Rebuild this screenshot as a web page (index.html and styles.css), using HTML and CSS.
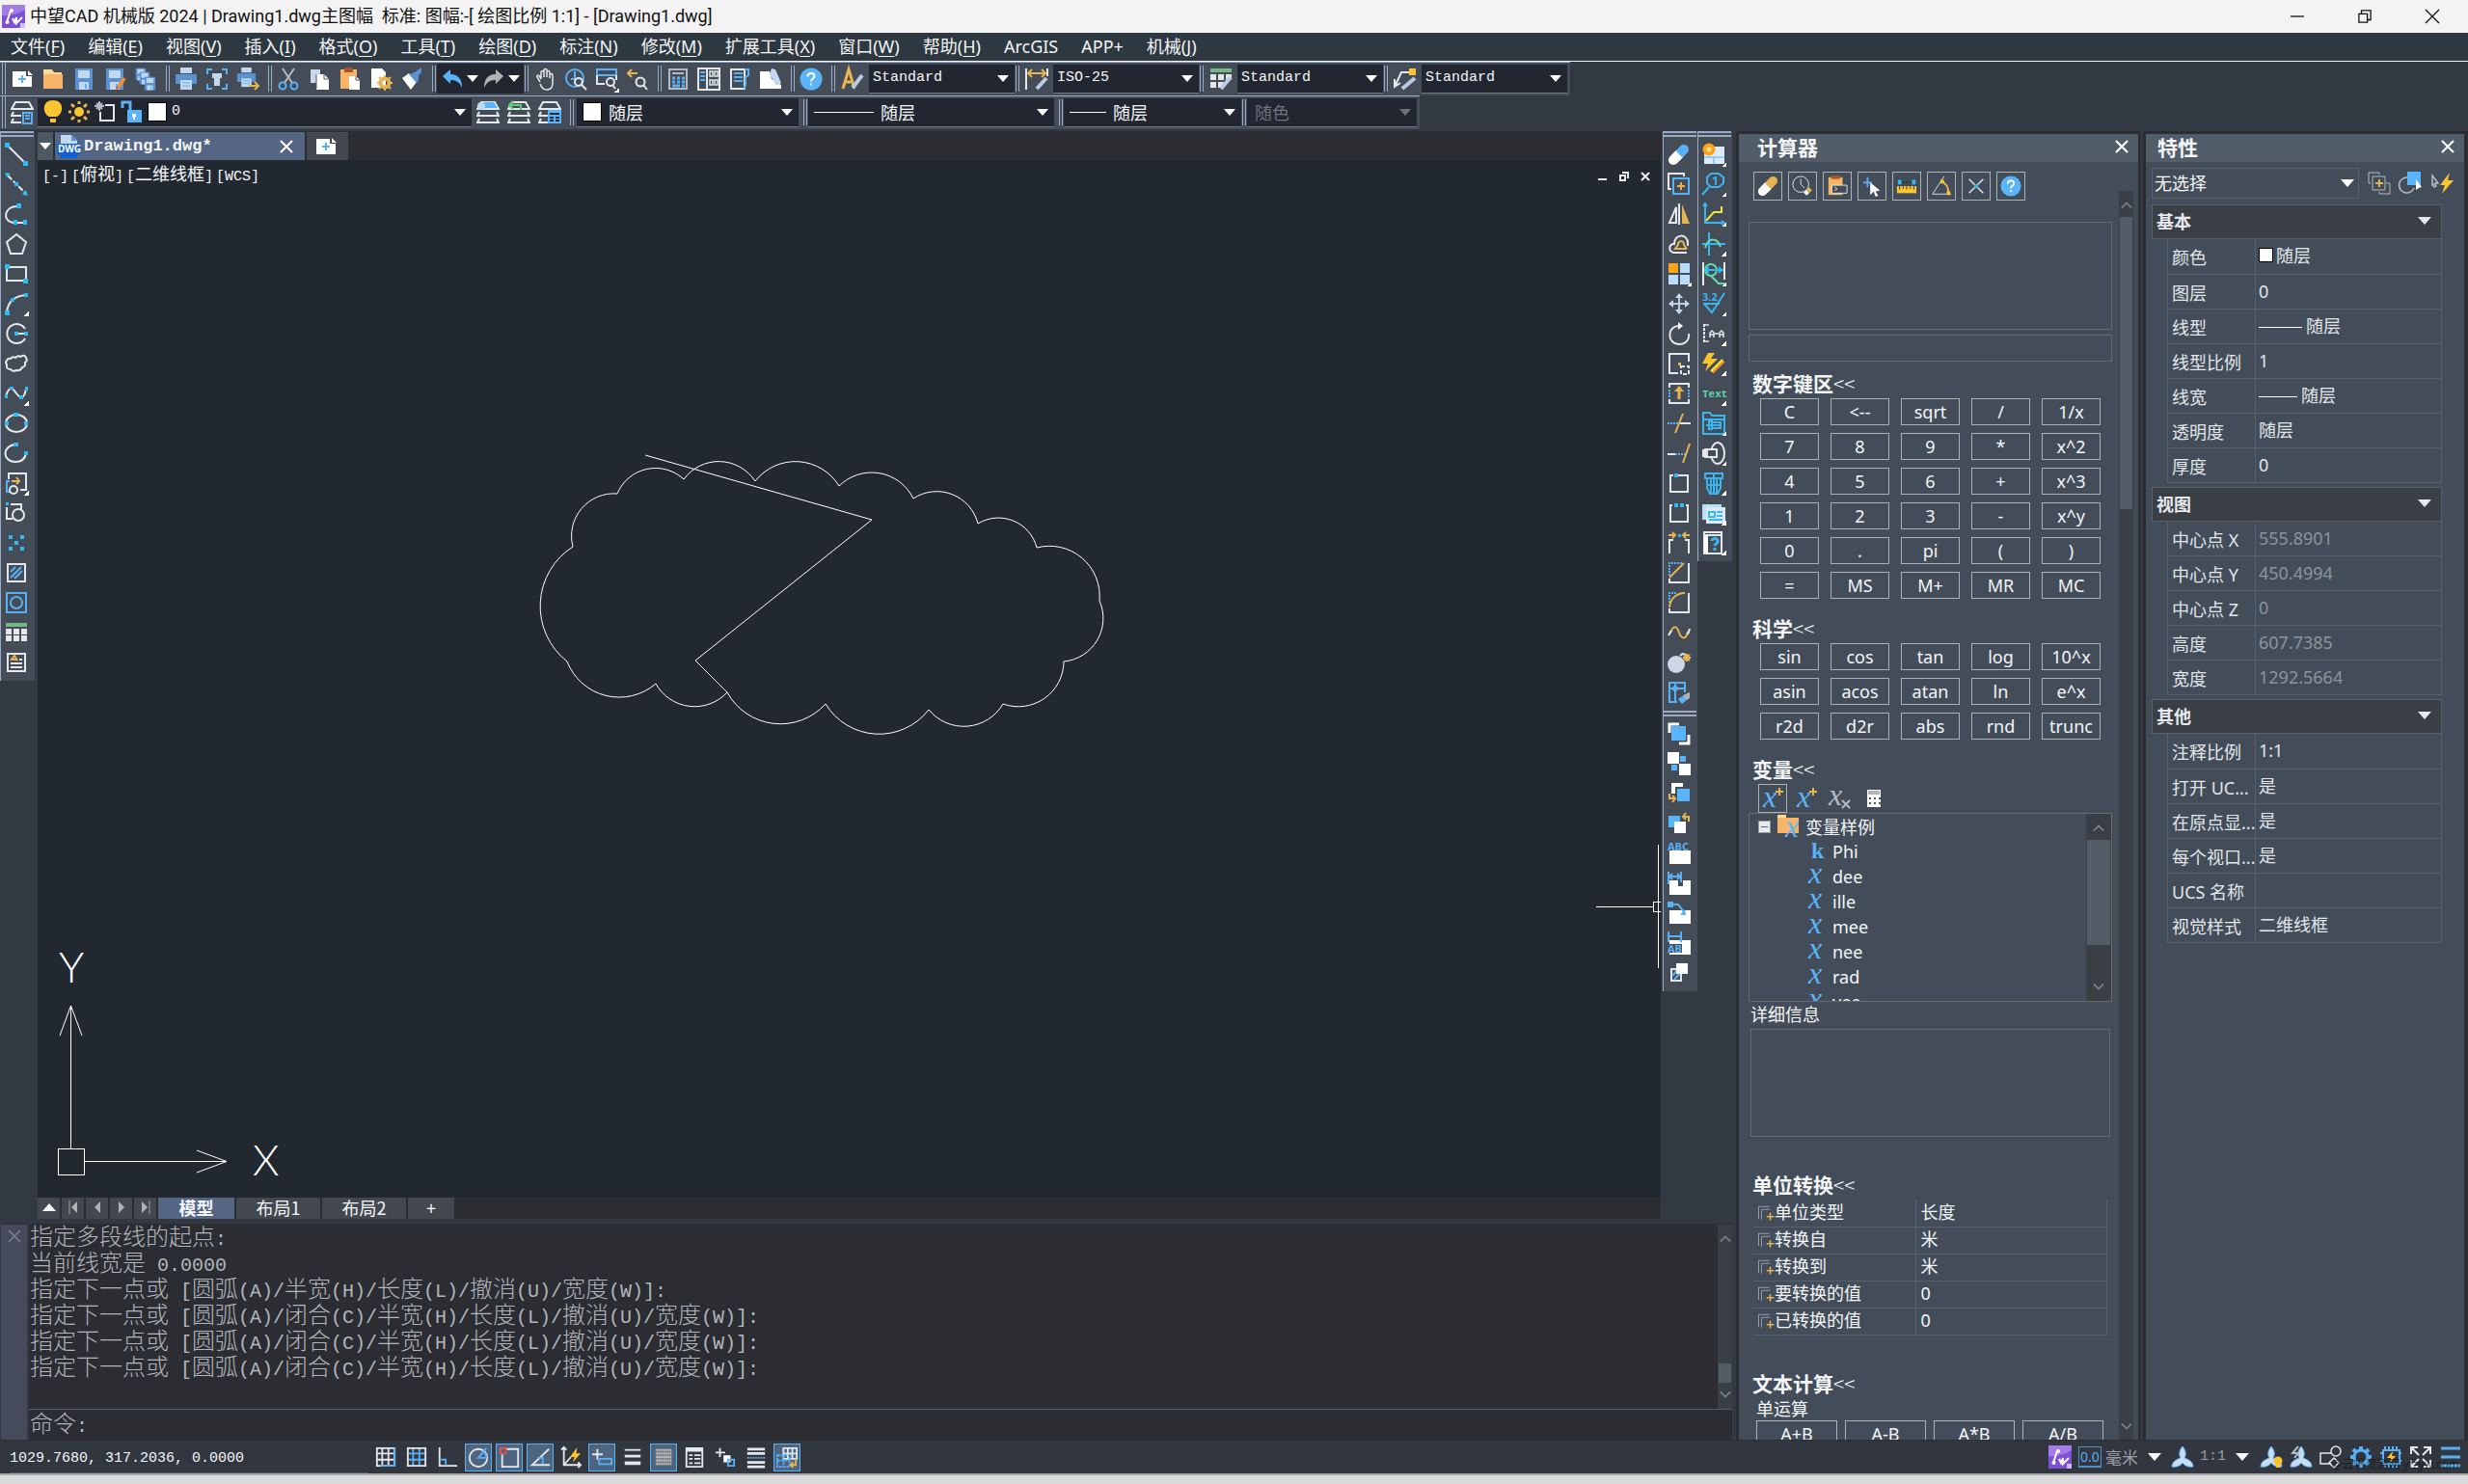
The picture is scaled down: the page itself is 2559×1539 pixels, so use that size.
FILE: index.html
```html
<!DOCTYPE html>
<html lang="zh-CN">
<head>
<meta charset="utf-8">
<title>中望CAD 机械版 2024</title>
<link rel="stylesheet" href="styles.css">
</head>
<body>
<svg class="defs" aria-hidden="true">
  <symbol id="logo" viewBox="0 0 24 24"><rect class="f-purple" width="24" height="24"/><path class="f-violet" d="M0 0h24v5Q12 12 0 11z"/><path class="s2" d="M5 18l4-12M11 14l2 4 2-5v6l6-6"/><circle class="fw" cx="5.500" cy="18" r="2"/><circle class="fw" cx="10" cy="6" r="2"/><rect class="f-lilac" x="19" y="19" width="5" height="5"/></symbol>
  <symbol id="down" viewBox="0 0 14 8"><path class="fill" d="M0 0h14l-7 8z"/></symbol>
  <symbol id="close" viewBox="0 0 16 16"><path d="M2 2l12 12M14 2L2 14"/></symbol>
  <symbol id="up" viewBox="0 0 14 8"><path d="M1 7l6-6 6 6"/></symbol>
  <symbol id="dn" viewBox="0 0 14 8"><path d="M1 1l6 6 6-6"/></symbol>
  <symbol id="newdoc" viewBox="0 0 24 24"><path class="fw" d="M2 4h14v5h6v11H2z"/><path class="fw" d="M18 3l5 5h-5z"/><path class="b" d="M8 12h8M12 8v8"/></symbol>
  <symbol id="help" viewBox="0 0 24 24"><circle class="fb" cx="12" cy="12" r="11.500"/><path class="s2" d="M8.500 9.500c0-5 7-4.500 7-.5 0 2.500-3.500 2.500-3.500 5.500M12 16.500v2"/></symbol>
  <symbol id="floppy" viewBox="0 0 24 24"><path class="f-save" d="M3 1h18v22H3z"/><path class="fl" d="M6 3h12v8H6zM7 15h10v8H7z"/><path class="fb" d="M13 17h2v5h-2z"/></symbol>
  <symbol id="printer" viewBox="0 0 24 24"><path class="fl" d="M6 0h12v6H6z"/><path class="f-save" d="M1 7h22v10H1z"/><path class="fl" d="M6 13h12v10H6z"/><path class="b s1" d="M8 16h8M8 19h8"/></symbol>
  <symbol id="stack" viewBox="0 0 24 24"><path d="M5 1h14l4 7H1zM3 11l-2 4h22l-2-4M3 18l-2 4h22l-2-4"/></symbol>
  <symbol id="varx" viewBox="0 0 24 24"><text class="ital" x="4" y="19">x</text></symbol>
  <symbol id="copyplus" viewBox="0 0 24 24"><path class="g s1" d="M2 20V3h15M6 21V7h12"/><path class="y" d="M13 17h10M18 12v10"/></symbol>
  <symbol id="aviator" viewBox="0 0 24 24"><path class="blade" d="M12 1C7 7 9 11 10 13 4 15 1 18 1 22c5 1 9-1 11-4 2 3 6 5 11 4 0-4-3-7-9-9 1-2 3-6-2-12z"/></symbol>
</svg>

<header class="titlebar">
  <svg class="ic"><use href="#logo"/></svg>
  <h1>中望CAD 机械版 2024 | Drawing1.dwg主图幅&nbsp; 标准: 图幅:-[ 绘图比例 1:1] - [Drawing1.dwg]</h1>
  <div class="winbtns">
    <button aria-label="最小化"><svg viewBox="0 0 16 16"><path d="M0 8h16"/></svg></button>
    <button aria-label="还原"><svg viewBox="0 0 16 16"><path d="M1 5h10v10H1zM4 5V1h11v11h-4"/></svg></button>
    <button aria-label="关闭"><svg viewBox="0 0 16 16"><path d="M0 0l16 16M16 0L0 16"/></svg></button>
  </div>
</header>

<nav class="menubar">
  <a href="#">文件(<u>F</u>)</a><a href="#">编辑(<u>E</u>)</a><a href="#">视图(<u>V</u>)</a><a href="#">插入(<u>I</u>)</a><a href="#">格式(<u>O</u>)</a><a href="#">工具(<u>T</u>)</a><a href="#">绘图(<u>D</u>)</a><a href="#">标注(<u>N</u>)</a><a href="#">修改(<u>M</u>)</a><a href="#">扩展工具(<u>X</u>)</a><a href="#">窗口(<u>W</u>)</a><a href="#">帮助(<u>H</u>)</a><a href="#">ArcGIS</a><a href="#">APP+</a><a href="#">机械(<u>J</u>)</a>
</nav>

<div class="bars">
  <div class="bar">
    <span class="grip first"></span>
    <button aria-label="新建"><svg class="ic"><use href="#newdoc"/></svg></button>
    <button aria-label="打开"><svg class="ic" viewBox="0 0 24 24"><path class="f-pale" d="M2 2h9l2 3h8v4H2z"/><path class="f-folder" d="M2 7h20v15H2z"/></svg></button>
    <button aria-label="保存"><svg class="ic"><use href="#floppy"/></svg></button>
    <button aria-label="另存为"><svg class="ic" viewBox="0 0 24 24"><use href="#floppy"/><path class="s4 or" d="M22 11l-6 9"/><path class="fr" d="M14 19l3 2-4 3z"/></svg></button>
    <button aria-label="全部保存"><svg class="ic" viewBox="0 0 24 24"><use href="#floppy" width="14" height="14"/><use href="#floppy" x="4" y="4" width="14" height="14"/><use href="#floppy" x="9" y="9" width="15" height="15"/></svg></button>
    <span class="grip"></span>
    <button aria-label="打印"><svg class="ic"><use href="#printer"/></svg></button>
    <button aria-label="打印预览"><svg class="ic" viewBox="0 0 24 24"><path class="b" d="M2 7V2h5M17 2h5v5M22 17v5h-5M7 22H2v-5"/><path class="fl" d="M7 6h10v5H7zM9 11h6v8H9z"/></svg></button>
    <button aria-label="发布"><svg class="ic" viewBox="0 0 24 24"><use href="#printer" width="21" height="21"/><path class="y" d="M13 19h9M19 15l4 4-4 4"/></svg></button>
    <span class="grip"></span>
    <button aria-label="剪切"><svg class="ic" viewBox="0 0 24 24"><path class="g" d="M6 1l10 15M18 1L8 16"/><circle class="b" cx="6" cy="19" r="3.500"/><circle class="b" cx="18" cy="19" r="3.500"/></svg></button>
    <button aria-label="复制"><svg class="ic" viewBox="0 0 24 24"><path class="fl" d="M3 2h10v14H3z"/><path class="fw" d="M9 7h8l5 5v11H9z"/><path class="gd s1" d="M17 7v5h5M9 7v15"/></svg></button>
    <button aria-label="粘贴"><svg class="ic" viewBox="0 0 24 24"><path class="f-folder" d="M2 2h17v20H2z"/><path class="f-brown" d="M6 0h9v5H6z"/><path class="fw" d="M11 9h7l4 4v10H11z"/><path class="gd s1" d="M18 9v4h4"/></svg></button>
    <button aria-label="特性管理"><svg class="ic" viewBox="0 0 24 24"><path class="fw" d="M2 1h11l4 4v16H2z"/><circle class="y s4" cx="16" cy="16" r="4.500"/><path class="y" d="M16 8v3M16 21v3M8 16h3M21 16h3M10 10l3 3M19 19l3 3M22 10l-3 3M13 19l-3 3"/></svg></button>
    <button aria-label="特性匹配"><svg class="ic" viewBox="0 0 24 24"><path class="fw" d="M2 11l7-5 8 9-6 8z"/><path class="f-save" d="M9 7l6-2 7-5v5l-3 3v5l-2 3z"/></svg></button>
    <span class="grip"></span>
    <div class="undo">
      <button aria-label="放弃"><svg class="ic" viewBox="0 0 24 24"><path class="fb" d="M2 9l8-7v5c8 0 12 5 12 14-2-5-5-8-12-8v4z"/></svg></button>
      <svg class="car"><use href="#down"/></svg>
      <button aria-label="重做"><svg class="ic" viewBox="0 0 24 24"><path class="fg" d="M22 9l-8-7v5C6 7 2 12 2 21c2-5 5-8 12-8v4z"/></svg></button>
      <svg class="car"><use href="#down"/></svg>
    </div>
    <span class="grip tight"></span>
    <button aria-label="平移"><svg class="ic" viewBox="0 0 24 24"><path class="s15" d="M7 15l-3-5c-1-2 1-3 3 0l1 2V5c0-2 3-2 3 0v5V3c0-2 3-2 3 0v7-5c0-2 3-2 3 0v6-3c0-2 3-2 3 0v8c0 4-2 7-6 7s-6-3-7-6"/></svg></button>
    <button aria-label="实时缩放"><svg class="ic" viewBox="0 0 24 24"><circle class="b" cx="11" cy="11" r="9"/><path class="b" d="M11 4v8H7"/><circle cx="15" cy="15" r="4"/><path d="M18 18l5 5"/></svg></button>
    <button aria-label="窗口缩放" class="fly"><svg class="ic" viewBox="0 0 24 24"><path class="b" d="M2 2h20v6H2z"/><path d="M2 8v9h8M22 8v5"/><circle cx="16" cy="15" r="4"/><path d="M18 18l3 4"/></svg></button>
    <button aria-label="缩放上一个"><svg class="ic" viewBox="0 0 24 24"><path class="y" d="M3 6h9M6 2L2 6l4 4"/><circle cx="15" cy="15" r="4.500"/><path d="M18 18l4 5"/></svg></button>
    <span class="grip"></span>
    <button aria-label="特性面板"><svg class="ic" viewBox="0 0 24 24"><path class="g" d="M3 2h18v20H3zM6 6h12"/><path class="b s3" d="M6 11h3M11 11h3M16 11h3M6 15h3M11 15h3M16 15h3M6 19h8M16 19h3"/></svg></button>
    <button aria-label="设计中心"><svg class="ic" viewBox="0 0 24 24"><path d="M1 1h22v22H1zM10 1v22"/><path class="b" d="M3 5h5M3 9h5M3 13h5"/><path class="s15" d="M13 4h3v5h-3zM18 4h3v5h-3zM13 13h3v5h-3zM18 13h3v5h-3z"/></svg></button>
    <button aria-label="工具选项板"><svg class="ic" viewBox="0 0 24 24"><path d="M3 2h14v20H3z"/><path class="b" d="M6 6h9M6 10h9M6 14h9M17 2h4v6l-3 2v8l-2 4"/></svg></button>
    <button aria-label="清理"><svg class="ic" viewBox="0 0 24 24"><path class="fw" d="M1 4h10l2 8 10 6v4H1z"/><path class="fl" d="M13 1l4 1 6 14-5 3-7-12z"/></svg></button>
    <span class="grip"></span>
    <button aria-label="帮助"><svg class="ic"><use href="#help"/></svg></button>
    <span class="grip"></span>
    <svg class="ic wide" viewBox="0 0 24 24"><path class="y s3" d="M2 22L8 2l6 20M4 15h8"/><path class="l s4" d="M22 8L12 21"/></svg>
    <div class="combo style"><select aria-label="文字样式"><option>Standard</option></select><svg class="car"><use href="#down"/></svg></div>
    <span class="grip tight"></span>
    <svg class="ic wide" viewBox="0 0 24 24"><path d="M1 1v22M23 1v8"/><path class="y" d="M3 6h18M7 2L3 6l4 4M17 2l4 4-4 4"/><path class="l s4" d="M22 11L12 22"/></svg>
    <div class="combo style"><select aria-label="标注样式"><option>ISO-25</option></select><svg class="car"><use href="#down"/></svg></div>
    <span class="grip tight"></span>
    <svg class="ic wide" viewBox="0 0 24 24"><path class="f-green" d="M1 1h22v4H1z"/><path class="fp" d="M1 7h6v6H1zM9 7h6v6H9zM17 7h6v6h-6zM1 15h6v6H1zM9 15h6v6H9z"/><path class="l s4" d="M22 10L12 22"/></svg>
    <div class="combo style"><select aria-label="表格样式"><option>Standard</option></select><svg class="car"><use href="#down"/></svg></div>
    <span class="grip tight"></span>
    <svg class="ic wide" viewBox="0 0 24 24"><path d="M16 5H8L2 18M1 12v8l6-4"/><path class="fy" d="M16 1h7v7h-7z"/><path class="l s4" d="M22 11L9 22"/></svg>
    <div class="combo style"><select aria-label="引线样式"><option>Standard</option></select><svg class="car"><use href="#down"/></svg></div>
  </div>

  <div class="bar">
    <span class="grip first"></span>
    <button aria-label="图层特性"><svg class="ic" viewBox="0 0 24 24"><use href="#stack"/><path class="f-bar" d="M11 9h13v15H11z"/><path class="b" d="M13 12h9v11h-9zM15 15h5M15 18h5"/></svg></button>
    <div class="combo layer">
      <svg class="ic" viewBox="0 0 24 24"><path class="fy" d="M12 0c12 0 11 14 4 17H8C1 14 0 0 12 0zM9 19h6v4H9z"/></svg>
      <svg class="ic" viewBox="0 0 24 24"><circle class="fy" cx="12" cy="12" r="5"/><path class="y s3" d="M12 1v3M12 20v3M1 12h3M20 12h3M4 4l3 3M17 17l3 3M20 4l-3 3M7 17l-3 3"/></svg>
      <svg class="ic" viewBox="0 0 24 24"><path d="M12 5h9v16H7V12"/><path class="g" d="M6 1v10M1 6h10M3 3l6 6M9 3L3 9"/></svg>
      <svg class="ic" viewBox="0 0 24 24"><path class="b s3" d="M3 8V2h8v9"/><path class="fb" d="M8 10h15v13H8z"/><path class="fw" d="M13 14h4v3h-1v3h-2v-3h-1z"/></svg>
      <span class="swatch big"></span>
      <select aria-label="图层"><option>0</option></select><svg class="car"><use href="#down"/></svg>
    </div>
    <button aria-label="图层置为当前"><svg class="ic" viewBox="0 0 24 24"><use href="#stack"/><path class="fb" d="M7 1h11l4 6H4z"/><circle class="fl" cx="5" cy="5" r="4"/></svg></button>
    <button aria-label="上一个图层"><svg class="ic" viewBox="0 0 24 24"><use href="#stack"/><path class="gr" d="M2 4h12v5M6 0L2 4l4 4"/></svg></button>
    <button aria-label="图层状态"><svg class="ic" viewBox="0 0 24 24"><use href="#stack"/><path class="fb" d="M10 9h14v14H10z"/><path class="dk" d="M12 13h10M12 17h4M18 17h4M12 20h4M18 20h4"/></svg></button>
    <span class="grip"></span>
    <div class="combo color"><span class="swatch big"></span><select aria-label="颜色"><option>随层</option></select><svg class="car"><use href="#down"/></svg></div>
    <span class="grip"></span>
    <div class="combo ltype"><span class="rule long"></span><select aria-label="线型"><option>随层</option></select><svg class="car"><use href="#down"/></svg></div>
    <span class="grip"></span>
    <div class="combo lweight"><span class="rule"></span><select aria-label="线宽"><option>随层</option></select><svg class="car"><use href="#down"/></svg></div>
    <span class="grip tight"></span>
    <div class="combo pstyle off"><select aria-label="打印样式" disabled><option>随色</option></select><svg class="car"><use href="#down"/></svg></div>
  </div>
</div>

<main class="work">
  <div class="left">
    <div class="stage">
      <aside class="dock">
        <div class="vbar">
          <button aria-label="直线"><svg class="ic" viewBox="0 0 24 24"><path d="M3 3l18 18"/><path class="fc" d="M0 0h5v5H0zM19 19h5v5h-5z"/></svg></button>
          <button aria-label="构造线"><svg class="ic" viewBox="0 0 24 24"><path stroke-dasharray="6 2" d="M3 3l18 18"/><path class="fc" d="M0 0l6 1-4 4zM24 24l-6-1 4-5zM10 10h4v4h-4z"/></svg></button>
          <button aria-label="多段线"><svg class="ic" viewBox="0 0 24 24"><path d="M14 4c-16-1-17 17-4 17h10"/><path class="fc" d="M12 1h5v5h-5zM9 18h4v5H9zM19 18h4v5h-4z"/></svg></button>
          <button aria-label="正多边形"><svg class="ic" viewBox="0 0 24 24"><path d="M12 2l10 8-4 12H6L2 10z"/></svg></button>
          <button aria-label="矩形"><svg class="ic" viewBox="0 0 24 24"><path d="M2 5h20v14H2z"/><path class="fc" d="M0 2h5v5H0zM19 17h5v5h-5z"/></svg></button>
          <button aria-label="圆弧" class="fly"><svg class="ic" viewBox="0 0 24 24"><path d="M2 21C3 10 10 4 22 3"/><path class="fc" d="M0 19h5v5H0zM6 6h4v4H6zM20 1h4v4h-4z"/></svg></button>
          <button aria-label="圆"><svg class="ic" viewBox="0 0 24 24"><path d="M21 7A10 10 0 1 0 21 17M12 12h9"/><path class="fc" d="M10 10h4v4h-4zM20 10h4v4h-4z"/></svg></button>
          <button aria-label="修订云线"><svg class="ic" viewBox="0 0 24 24"><path d="M2 9q1-3 4-2 2-3 5-1 3-3 5-1 5-3 6 1 2 3-1 5 1 4-3 5-2 4-6 3-4 2-6-1-5 0-4-5-2-2 0-4z"/></svg></button>
          <button aria-label="样条曲线" class="fly"><svg class="ic" viewBox="0 0 24 24"><path d="M1 15C5 2 9 8 12 12s8 8 10-5"/><path class="fc" d="M0 13h3v4H0zM5 5h4v3H5zM15 14h4v4h-4zM21 5h3v4h-3z"/></svg></button>
          <button aria-label="椭圆"><svg class="ic" viewBox="0 0 24 24"><ellipse cx="12" cy="12" rx="11" ry="9"/><path class="fc" d="M9 1h5v4H9zM0 10h4v4H0zM20 10h4v4h-4z"/></svg></button>
          <button aria-label="椭圆弧"><svg class="ic" viewBox="0 0 24 24"><path d="M11 3C-3 4-3 21 11 21c6 0 10-3 11-9"/><path class="fc" d="M9 1h5v4H9zM20 10h4v4h-4z"/></svg></button>
          <button aria-label="插入块" class="fly"><svg class="ic" viewBox="0 0 24 24"><path d="M4 8V2h18v17h-6"/><path class="b" d="M5 10H2v11h4"/><circle cx="9" cy="19" r="4"/><path class="y" d="M7 10h7M12 6l3 4-3 3"/></svg></button>
          <button aria-label="创建块"><svg class="ic" viewBox="0 0 24 24"><path d="M6 3h11v6M2 6v12h6"/><circle cx="14" cy="14" r="6"/><path class="fc" d="M1 1h3v3H1z"/></svg></button>
          <button aria-label="点"><svg class="ic" viewBox="0 0 24 24"><path class="fc" d="M4 4h4v4H4zM16 4h4v4h-4zM10 10h4v4h-4zM4 16h4v4H4zM16 16h4v4h-4z"/></svg></button>
          <button aria-label="图案填充"><svg class="ic" viewBox="0 0 24 24"><path d="M3 3h18v18H3z"/><path class="b" d="M6 11l5-5M6 17L17 6M10 18l8-8"/></svg></button>
          <button aria-label="面域"><svg class="ic" viewBox="0 0 24 24"><path class="b" d="M2 2h20v20H2z"/><circle class="b" cx="12" cy="12" r="6"/></svg></button>
          <button aria-label="表格"><svg class="ic" viewBox="0 0 24 24"><path class="f-green" d="M1 2h22v4H1z"/><path class="fp" d="M1 8h6v6H1zM9 8h6v6H9zM17 8h6v6h-6zM1 15h6v6H1zM9 15h6v6H9zM17 15h6v6h-6z"/></svg></button>
          <button aria-label="多行文字"><svg class="ic" viewBox="0 0 24 24"><path d="M3 3h18v18H3z"/><path class="y" d="M6 10l4-5 3 5M8 9h4"/><path d="M6 13h12M6 17h12M15 9h3"/></svg></button>
        </div>
      </aside>

      <section class="doc">
        <div class="doctabs">
          <button class="tabmenu" aria-label="文档列表"><svg class="car"><use href="#down"/></svg></button>
          <div class="doctab">
            <svg class="ic" viewBox="0 0 24 24"><path class="fl" d="M4 0h11l6 6v12H4z"/><path class="f-save" d="M15 0v6h6z"/><rect class="f-dwg" y="9" width="24" height="11"/><path class="f-dwg" d="M4 20h17v4H4z"/><text class="tiny" x="1" y="18">DWG</text></svg>
            <span>Drawing1.dwg*</span>
            <button aria-label="关闭文档"><svg class="x"><use href="#close"/></svg></button>
          </div>
          <button class="newtab" aria-label="新建文档"><svg class="ic"><use href="#newdoc"/></svg></button>
        </div>
        <div class="canvas">
          <svg class="drawing" viewBox="39 166 1683 1076" preserveAspectRatio="xMinYMin meet">
            <path d="M640 512A43 43 0 0 1 709 497A45 45 0 0 1 783 499A53 53 0 0 1 870 504A48 48 0 0 1 947 517A44 44 0 0 1 1014 543A41 41 0 0 1 1075 568A52 52 0 0 1 1140 623A45 45 0 0 1 1103 686A47 47 0 0 1 1040 730A47 47 0 0 1 963 736A65 65 0 0 1 856 730A63 63 0 0 1 754 718A46 46 0 0 1 680 709A58 58 0 0 1 588 686A73 73 0 0 1 594 567A44 44 0 0 1 640 512z"/>
            <path d="M669 472L904 539L721 685L754 718"/>
            <path class="crisp" d="M73.500 1043v148M60.500 1191.500h27v27h-27zM88 1204.500h147M1655 940.500h59M1714.500 935.500h12v10h-12zM1719.500 876v128"/>
            <path d="M62 1074l11.500-31 11.500 31M204 1193l31 11.500-31 11.500"/>
            <text x="61" y="1019">Y</text><text x="262" y="1219">X</text>
          </svg>
          <div class="viewlabel"><span><i>[-]</i></span><span><i>[</i>俯视<i>]</i></span><span><i>[</i>二维线框<i>]</i></span><span><i>[WCS]</i></span></div>
          <div class="mdi">
            <button aria-label="最小化视图"><svg viewBox="0 0 12 12"><path d="M1 9h9"/></svg></button>
            <button aria-label="还原视图"><svg viewBox="0 0 12 12"><path d="M2 5h5v5H2zM4 2h6v6"/></svg></button>
            <button aria-label="关闭视图"><svg viewBox="0 0 12 12"><path d="M2 2l8 8M10 2l-8 8"/></svg></button>
          </div>
        </div>
        <div class="layouts">
          <button class="nav" aria-label="布局列表"><svg viewBox="0 0 14 14"><path class="fw" d="M0 11h14L7 3z"/></svg></button>
          <button class="nav" aria-label="第一个"><svg viewBox="0 0 14 14"><path class="thin" d="M3 0v14"/><path class="fg" d="M11 1v12L5 7z"/></svg></button>
          <button class="nav" aria-label="上一个"><svg viewBox="0 0 14 14"><path class="fg" d="M10 1v12L4 7z"/></svg></button>
          <button class="nav" aria-label="下一个"><svg viewBox="0 0 14 14"><path class="fg" d="M4 1v12l6-6z"/></svg></button>
          <button class="nav" aria-label="最后一个"><svg viewBox="0 0 14 14"><path class="thin" d="M11 0v14"/><path class="fg" d="M3 1v12l6-6z"/></svg></button>
          <button class="lay model">模型</button><button class="lay">布局1</button><button class="lay">布局2</button><button class="lay plus">+</button>
        </div>
      </section>

      <aside class="tools">
        <div>
          <div class="vbar">
            <button aria-label="删除"><svg class="ic" viewBox="0 0 24 24"><path class="s9 cap wh" d="M6 18l6-6"/><path class="s9 cap b" d="M14 10l3-3"/><path class="s9 wh" d="M8 16l4-4"/></svg></button>
            <button aria-label="复制对象"><svg class="ic" viewBox="0 0 24 24"><path d="M17 4V1H1v16h3"/><path class="b" d="M6 6h16v16H6z"/><path class="y" d="M10 14h8M14 10v8"/></svg></button>
            <button aria-label="镜像"><svg class="ic" viewBox="0 0 24 24"><path d="M9 5v16H2zM12 1v22"/><path class="fo" d="M15 2l8 20h-8z"/></svg></button>
            <button aria-label="偏移"><svg class="ic" viewBox="0 0 24 24"><path d="M20 21H6c-6-2-4-10 1-9 0-11 14-11 14-1v3"/><path class="y" d="M20 17H8l3-4c-1-5 7-5 6 0l3 4"/></svg></button>
            <button aria-label="阵列" class="fly"><svg class="ic" viewBox="0 0 24 24"><path class="fo2" d="M1 1h10v10H1z"/><path class="f-sky" d="M13 1h10v10H13zM1 13h10v10H1zM13 13h10v10H13z"/></svg></button>
            <button aria-label="移动"><svg class="ic" viewBox="0 0 24 24"><path class="l" d="M12 4v16M4 12h16"/><path class="fl" d="M12 1l4 5H8zM12 23l4-5H8zM1 12l5-4v8zM23 12l-5-4v8z"/></svg></button>
            <button aria-label="旋转"><svg class="ic" viewBox="0 0 24 24"><path d="M13 4C-1 3-1 23 12 23c6 0 11-4 10-11"/><path class="fw" d="M11 0l5 4-5 4z"/></svg></button>
            <button aria-label="缩放"><svg class="ic" viewBox="0 0 24 24"><path d="M22 10V2H2v20h9"/><path stroke-dasharray="4 2" d="M14 15h8v8h-8z"/><path class="fo" d="M11 11h3v3h-3z"/></svg></button>
            <button aria-label="拉伸"><svg class="ic" viewBox="0 0 24 24"><path d="M2 6V2h20v4M2 18v4h20v-4"/><path class="b" stroke-dasharray="2 1" d="M2 8v8M22 8v8"/><path class="y s3" d="M12 18V8"/><path class="fo" d="M12 4l5 6H7z"/></svg></button>
            <button aria-label="修剪"><svg class="ic" viewBox="0 0 24 24"><path class="b" stroke-dasharray="2 1" d="M0 12h11"/><path d="M13 12h11"/><path class="y" d="M16 2L8 22"/></svg></button>
            <button aria-label="延伸"><svg class="ic" viewBox="0 0 24 24"><path d="M0 13h8"/><path class="b" stroke-dasharray="2 1" d="M8 13h10"/><path class="y" d="M23 2l-7 20"/></svg></button>
            <button aria-label="打断于点"><svg class="ic" viewBox="0 0 24 24"><path d="M6 4H3v17h18V4H11"/><path class="fc" d="M7 2h4v4H7z"/></svg></button>
            <button aria-label="打断"><svg class="ic" viewBox="0 0 24 24"><path d="M5 4H3v17h18V4h-2"/><path class="fc" d="M7 2h4v4H7zM13 2h4v4h-4z"/></svg></button>
            <button aria-label="合并"><svg class="ic" viewBox="0 0 24 24"><path d="M6 9H2v14M18 9h4v14"/><path class="y" d="M1 4h7M5 1l3 3-3 3M23 4h-7M19 1l-3 3 3 3"/><path class="fc" d="M11 3h3v3h-3z"/></svg></button>
            <button aria-label="倒角"><svg class="ic" viewBox="0 0 24 24"><path class="b" stroke-dasharray="2 1" d="M2 15V2h14"/><path d="M22 2v20H2v-4"/><path class="y" d="M2 17L17 2"/></svg></button>
            <button aria-label="圆角"><svg class="ic" viewBox="0 0 24 24"><path class="b" stroke-dasharray="2 1" d="M2 12V2h8"/><path d="M22 2v20H2v-4"/><path class="y" d="M2 17C3 8 9 2 18 2"/></svg></button>
            <button aria-label="光顺曲线"><svg class="ic" viewBox="0 0 24 24"><path class="y" d="M3 12c4-9 7-6 9 0s7 9 9-1"/><path d="M1 15l3-5M23 8l-2 6"/></svg></button>
            <button aria-label="分解"><svg class="ic" viewBox="0 0 24 24"><circle class="f-ball" cx="9" cy="14" r="9"/><path d="M13 5q4-4 6 0"/><path class="y" d="M20 3v8M16 7h8M17 4l6 6M23 4l-6 6"/></svg></button>
            <button aria-label="动态块"><svg class="ic" viewBox="0 0 24 24"><path class="b" d="M18 12V2H2v20h8M2 8h16M8 2v20"/><circle class="b" cx="8" cy="8" r="2"/><path class="fb" d="M11 19l6-4 4 4-6 5z"/><path class="fg" d="M16 15l7-3v6l-3 2z"/></svg></button>
          </div>
          <div class="vbar">
            <button aria-label="前置"><svg class="ic" viewBox="0 0 24 24"><path class="s3 wh" d="M2 11V2h10M22 13v9H12"/><path class="fb" d="M4 4h15v15H4z"/></svg></button>
            <button aria-label="后置"><svg class="ic" viewBox="0 0 24 24"><path class="fw" d="M0 0h12v12H0zM12 12h12v12H12z"/><path class="fb" d="M13 4h6v6h-6zM4 13h6v6H4z"/></svg></button>
            <button aria-label="置于对象之上"><svg class="ic" viewBox="0 0 24 24"><path class="s4 wh" d="M6 12V3h10"/><path class="fb" d="M10 7h13v13H10z"/><path class="y" d="M2 12v5h5M5 14l3 3-3 4"/></svg></button>
            <button aria-label="置于对象之下"><svg class="ic" viewBox="0 0 24 24"><path class="fb" d="M1 4h12v12H1z"/><path class="fw" d="M7 10h12v12H7z"/><path class="y" d="M22 10V5h-5M19 1l-3 4 3 3"/></svg></button>
            <button aria-label="文字前置"><svg class="ic" viewBox="0 0 24 24"><path class="fw" d="M2 9h22v14H2z"/><text class="mini" x="0" y="9">ABC</text></svg></button>
            <button aria-label="标注前置"><svg class="ic" viewBox="0 0 24 24"><path class="fw" d="M2 9h9v6h5V9h8v15H2z"/><path class="b" d="M1 0v13M14 0v11M2 5h11M5 2L2 5l3 3M10 2l3 3-3 3"/></svg></button>
            <button aria-label="引线前置"><svg class="ic" viewBox="0 0 24 24"><path class="fw" d="M2 9h22v14H2z"/><path class="b" d="M3 3h8l7 9"/><path class="fb" d="M0 0h6v6H0zM19 14h-6l5-6z"/></svg></button>
            <button aria-label="注释前置"><svg class="ic" viewBox="0 0 24 24"><path class="fw" d="M2 9h22v15H2z"/><path class="b" d="M1 0v11M14 0v11M2 5h11"/><path class="f-bar" d="M0 13h15v9H0z"/><text class="mini" x="0" y="22">AB</text></svg></button>
            <button aria-label="填充后置"><svg class="ic" viewBox="0 0 24 24"><path d="M4 8h10v12H4z"/><path class="b" d="M5 15l5-6M7 19l7-8"/><path class="fw" d="M9 2h12v11H9z"/></svg></button>
          </div>
        </div>
        <div>
          <div class="vbar">
            <button aria-label="图幅" class="fly"><svg class="ic" viewBox="0 0 24 24"><path class="f-sheet" d="M2 4h21v18H2z"/><path class="b s1" d="M12 15v7M2 15h21"/><circle class="fo2" cx="7" cy="7" r="6.500"/><circle class="f-pale" cx="7" cy="7" r="2.500"/></svg></button>
            <button aria-label="序号" class="fly"><svg class="ic" viewBox="0 0 24 24"><path class="c" d="M9 1h8l5 4v6l-5 4H9l-4-4V5zM7 15l-7 8"/><text class="num" x="10" y="13">1</text></svg></button>
            <button aria-label="坐标图" class="fly"><svg class="ic" viewBox="0 0 24 24"><path class="c" d="M3 2v19h19M1 4l2-3 2 3M20 19l3 2-3 2"/><path class="ye" d="M4 19l8-9h8V4"/></svg></button>
            <button aria-label="中心线" class="fly"><svg class="ic" viewBox="0 0 24 24"><path class="c" d="M0 12h24M7 0v24"/><path class="m" d="M3 16C7 4 16 6 19 15"/></svg></button>
            <button aria-label="智能标注" class="fly"><svg class="ic" viewBox="0 0 24 24"><path d="M1 0v24M23 0v18"/><circle class="m" cx="9" cy="8" r="6"/><path class="m" d="M9 14l8 8h6"/><path class="c" d="M2 8h20"/><path class="fc" d="M2 8l5-4v8zM22 8l-5-4v8z"/></svg></button>
            <button aria-label="粗糙度" class="fly"><svg class="ic" viewBox="0 0 24 24"><path class="c" d="M1 12h17M2 12l8 9L23 1"/><text class="mini cy" x="0" y="9">3.2</text></svg></button>
            <button aria-label="剖切线" class="fly"><svg class="ic" viewBox="0 0 24 24"><path stroke-dasharray="3 1" d="M2 2v20"/><path class="s15" d="M2 3h5M2 20h5M12 12h5M8 16v-5l2-2 2 2v5M8 13h4M18 16v-5l2-2 2 2v5M18 13h4"/></svg></button>
            <button aria-label="超级编辑" class="fly"><svg class="ic" viewBox="0 0 24 24"><path class="fy" d="M6 1h7L9 7h7L3 20l3-8H0z"/><path class="s4 or" d="M10 21L22 9"/><path class="ye" d="M9 20L21 8"/></svg></button>
            <button aria-label="文字" class="fly"><svg class="ic" viewBox="0 0 24 24"><text class="mini mt" x="0" y="16">Text</text></svg></button>
            <button aria-label="图库" class="fly"><svg class="ic" viewBox="0 0 24 24"><path class="c" d="M1 23V1h7l2 3h13v19zM1 8h22M4 14h16M7 10h3v8H7zM10 11h9v6h-9z"/></svg></button>
            <button aria-label="螺栓" class="fly"><svg class="ic" viewBox="0 0 24 24"><ellipse cx="16" cy="12" rx="7" ry="11"/><path class="f-bar w" d="M3 8h12v8H3zM1 9h4v6H1z"/></svg></button>
            <button aria-label="轴系" class="fly"><svg class="ic" viewBox="0 0 24 24"><path class="c" d="M3 2h18v5H3zM5 7v10l3 6h8l3-6V7M9 7v15M15 7v15M5 14h14M12 1v22"/></svg></button>
            <button aria-label="图纸管理" class="fly"><svg class="ic" viewBox="0 0 24 24"><path class="f-sky" d="M0 3h20v16H0z"/><path class="f-sheet" d="M4 6h20v17H4z"/><path class="c" d="M7 11h6v5H7zM15 11h6M15 15h6M7 19h14"/></svg></button>
            <button aria-label="机械帮助" class="fly"><svg class="ic" viewBox="0 0 24 24"><path d="M2 1h18v22H2zM2 4h18"/><path class="fw" d="M2 5h4v18H2z"/><path class="c s3" d="M10 10c0-4 7-3 6 1-1 2-3 2-3 4M13 17v3"/></svg></button>
          </div>
        </div>
      </aside>
    </div>

    <section class="command">
      <div class="strip"><svg class="x"><use href="#close"/></svg></div>
      <div class="cmdbody">
        <div class="log">
          <div class="lines">
            <p>指定多段线的起点<i>:</i></p>
            <p>当前线宽是<i> 0.0000</i></p>
            <p>指定下一点或<i> [</i>圆弧<i>(A)/</i>半宽<i>(H)/</i>长度<i>(L)/</i>撤消<i>(U)/</i>宽度<i>(W)]:</i></p>
            <p>指定下一点或<i> [</i>圆弧<i>(A)/</i>闭合<i>(C)/</i>半宽<i>(H)/</i>长度<i>(L)/</i>撤消<i>(U)/</i>宽度<i>(W)]:</i></p>
            <p>指定下一点或<i> [</i>圆弧<i>(A)/</i>闭合<i>(C)/</i>半宽<i>(H)/</i>长度<i>(L)/</i>撤消<i>(U)/</i>宽度<i>(W)]:</i></p>
            <p>指定下一点或<i> [</i>圆弧<i>(A)/</i>闭合<i>(C)/</i>半宽<i>(H)/</i>长度<i>(L)/</i>撤消<i>(U)/</i>宽度<i>(W)]:</i></p>
          </div>
          <div class="scroll"><svg><use href="#up"/></svg><span class="track"></span><span class="thumb s"></span><svg><use href="#dn"/></svg></div>
        </div>
        <div class="prompt"><label for="cmd">命令<i>:</i></label><input id="cmd" type="text"></div>
      </div>
    </section>
  </div>

  <aside class="panel calc">
    <header><h2>计算器</h2><button aria-label="关闭计算器"><svg class="x"><use href="#close"/></svg></button></header>
    <div class="calcbody">
      <div class="calcmain">
        <div class="ctools">
          <button aria-label="清除"><svg class="ic" viewBox="0 0 24 24"><path class="s9 cap wh" d="M6 18l6-6"/><path class="s9 cap y" d="M14 10l4-4"/><path class="s9 wh" d="M8 16l4-4"/></svg></button>
          <button aria-label="清除历史"><svg class="ic" viewBox="0 0 24 24"><circle class="s1" cx="10" cy="10" r="9"/><path class="s1" d="M10 4v6l4 4"/><path class="s5 wh" d="M15 21l3-3"/><path class="s5 y" d="M18 18l3-3"/></svg></button>
          <button aria-label="粘贴到命令行"><svg class="ic" viewBox="0 0 24 24"><path class="f-folder" d="M2 2h16v20H2z"/><path class="f-brown" d="M5 0h10v4H5z"/><path class="f-bar w s1" d="M6 11h17v9H6z"/><path class="s1" d="M9 13l3 2-3 2"/></svg></button>
          <button aria-label="获取坐标"><svg class="ic" viewBox="0 0 24 24"><path class="b" d="M2 8h10M7 2v11"/><path class="fw" d="M10 8l11 9-5 1 3 5-3 1-2-6-4 4z"/></svg></button>
          <button aria-label="两点距离"><svg class="ic" viewBox="0 0 24 24"><path class="fc" d="M2 5h4v5H2zM18 5h4v5h-4z"/><path class="dk" stroke-dasharray="2 2" d="M7 8h10"/><path class="fy" d="M1 12h22v8H1z"/><path class="dk s1" d="M4 12v4M8 12v3M12 12v4M16 12v3M20 12v4"/></svg></button>
          <button aria-label="角度"><svg class="ic" viewBox="0 0 24 24"><path class="s1" d="M15 1L2 21h21"/><path class="y" d="M12 7c6 2 8 7 8 13"/><path class="fy" d="M11 5h4v4h-4zM18 18h4v4h-4z"/></svg></button>
          <button aria-label="交点"><svg class="ic" viewBox="0 0 24 24"><path class="s15" d="M4 4l16 16M20 4L4 20"/><path class="fc" d="M10 10h4v4h-4z"/></svg></button>
          <button aria-label="计算器帮助"><svg class="ic"><use href="#help"/></svg></button>
        </div>
        <textarea class="hist" aria-label="历史"></textarea>
        <input class="expr" type="text" aria-label="表达式">
        <h3 class="sec near">数字键区<span>&lt;&lt;</span></h3>
        <div class="keys">
          <button>C</button><button>&lt;--</button><button>sqrt</button><button>/</button><button>1/x</button>
          <button>7</button><button>8</button><button>9</button><button>*</button><button>x^2</button>
          <button>4</button><button>5</button><button>6</button><button>+</button><button>x^3</button>
          <button>1</button><button>2</button><button>3</button><button>-</button><button>x^y</button>
          <button>0</button><button>.</button><button>pi</button><button>(</button><button>)</button>
          <button>=</button><button>MS</button><button>M+</button><button>MR</button><button>MC</button>
        </div>
        <h3 class="sec">科学<span>&lt;&lt;</span></h3>
        <div class="keys">
          <button>sin</button><button>cos</button><button>tan</button><button>log</button><button>10^x</button>
          <button>asin</button><button>acos</button><button>atan</button><button>ln</button><button>e^x</button>
          <button>r2d</button><button>d2r</button><button>abs</button><button>rnd</button><button>trunc</button>
        </div>
        <h3 class="sec">变量<span>&lt;&lt;</span></h3>
        <div class="vtools">
          <button class="on" aria-label="新建变量"><svg class="ic blue" viewBox="0 0 24 24"><use href="#varx" x="-2" y="2"/><path class="y" d="M15 5h8M19 1v8"/></svg></button>
          <button aria-label="编辑变量"><svg class="ic blue" viewBox="0 0 24 24"><use href="#varx" x="-2" y="2"/><path class="y" d="M15 5h8M19 1v8"/></svg></button>
          <button aria-label="删除变量"><svg class="ic gray" viewBox="0 0 24 24"><use href="#varx" x="-4"/><path class="g" d="M14 14l8 8M22 14l-8 8"/></svg></button>
          <button aria-label="返回到输入"><svg class="ic" viewBox="0 0 24 24"><path class="fw" d="M5 3h14v18H5z"/><path class="fg" d="M6 4h12v4H6z"/><path class="gd" stroke-dasharray="2 3" d="M7 12h12M7 17h12"/></svg></button>
        </div>
        <div class="tree">
          <ul>
            <li class="root"><span class="minus"></span><svg class="ic blue" viewBox="0 0 24 24"><path class="f-pale" d="M1 0h9v5H1z"/><path class="f-folder" d="M1 3h22v16H1z"/><use href="#varx" x="5" y="4"/></svg>变量样例</li>
            <li><svg class="ic blue" viewBox="0 0 24 24"><text class="kk" x="7" y="19">k</text></svg>Phi</li>
            <li><svg class="ic blue"><use href="#varx"/></svg>dee</li>
            <li><svg class="ic blue"><use href="#varx"/></svg>ille</li>
            <li><svg class="ic blue"><use href="#varx"/></svg>mee</li>
            <li><svg class="ic blue"><use href="#varx"/></svg>nee</li>
            <li><svg class="ic blue"><use href="#varx"/></svg>rad</li>
            <li><svg class="ic blue"><use href="#varx"/></svg>vee</li>
          </ul>
          <div class="scroll big"><svg><use href="#up"/></svg><span class="thumb t"></span><span class="track"></span><svg><use href="#dn"/></svg></div>
        </div>
        <label class="detail" for="det">详细信息</label>
        <textarea id="det" class="hist det"></textarea>
        <h3 class="sec far">单位转换<span>&lt;&lt;</span></h3>
        <table class="units">
          <tr><th><svg class="sm"><use href="#copyplus"/></svg>单位类型</th><td>长度</td></tr>
          <tr><th><svg class="sm"><use href="#copyplus"/></svg>转换自</th><td>米</td></tr>
          <tr><th><svg class="sm"><use href="#copyplus"/></svg>转换到</th><td>米</td></tr>
          <tr><th><svg class="sm"><use href="#copyplus"/></svg>要转换的值</th><td>0</td></tr>
          <tr><th><svg class="sm"><use href="#copyplus"/></svg>已转换的值</th><td>0</td></tr>
        </table>
        <h3 class="sec far">文本计算<span>&lt;&lt;</span></h3>
        <div class="single">单运算</div>
        <div class="ops"><button>A+B</button><button>A-B</button><button>A*B</button><button>A/B</button></div>
      </div>
      <div class="scroll main"><svg><use href="#up"/></svg><span class="thumb m"></span><span class="track"></span><svg><use href="#dn"/></svg></div>
    </div>
  </aside>

  <aside class="panel props">
    <header><h2>特性</h2><button aria-label="关闭特性"><svg class="x"><use href="#close"/></svg></button></header>
    <div class="pick">
      <div class="pickbox"><select aria-label="选择"><option>无选择</option></select><svg class="car"><use href="#down"/></svg></div>
      <button aria-label="切换选择"><svg class="ic" viewBox="0 0 24 24"><path class="s1 g" d="M3 12H1V1h11v2M5 5h13v14H5zM19 12h4v11H12v-2"/><path class="y" d="M8 12h8M12 8v8"/></svg></button>
      <button aria-label="选择对象"><svg class="ic" viewBox="0 0 24 24"><path class="g s15" d="M8 6A8 8 0 1 0 15 17"/><path class="fb" d="M8 0h14v14H8z"/><path class="fw" d="M17 8l6 8-3 1-3 2z"/></svg></button>
      <button aria-label="快速选择"><svg class="ic" viewBox="0 0 24 24"><path class="g s15" d="M1 4l6 8H4l1 3-2 1-1-3-1 1z"/><path class="fy" d="M19 1l-10 13h5l-3 9L23 9h-6z"/></svg></button>
    </div>
    <h3 class="grp">基本<svg class="car"><use href="#down"/></svg></h3>
    <table>
      <tr><th>颜色</th><td><span class="swatch"></span>随层</td></tr>
      <tr><th>图层</th><td>0</td></tr>
      <tr><th>线型</th><td><span class="rule long"></span>随层</td></tr>
      <tr><th>线型比例</th><td>1</td></tr>
      <tr><th>线宽</th><td><span class="rule"></span>随层</td></tr>
      <tr><th>透明度</th><td>随层</td></tr>
      <tr><th>厚度</th><td>0</td></tr>
    </table>
    <h3 class="grp">视图<svg class="car"><use href="#down"/></svg></h3>
    <table class="ro">
      <tr><th>中心点 X</th><td>555.8901</td></tr>
      <tr><th>中心点 Y</th><td>450.4994</td></tr>
      <tr><th>中心点 Z</th><td>0</td></tr>
      <tr><th>高度</th><td>607.7385</td></tr>
      <tr><th>宽度</th><td>1292.5664</td></tr>
    </table>
    <h3 class="grp">其他<svg class="car"><use href="#down"/></svg></h3>
    <table>
      <tr><th>注释比例</th><td>1:1</td></tr>
      <tr><th>打开 UC...</th><td>是</td></tr>
      <tr><th>在原点显...</th><td>是</td></tr>
      <tr><th>每个视口...</th><td>是</td></tr>
      <tr><th>UCS 名称</th><td></td></tr>
      <tr><th>视觉样式</th><td>二维线框</td></tr>
    </table>
  </aside>
</main>

<footer class="status">
  <output class="coords">1029.7680, 317.2036, 0.0000</output>
  <div class="toggles">
    <button aria-label="捕捉"><svg class="ic" viewBox="0 0 24 24"><path d="M2 2h20v20H2zM8 2v20M15 2v20M2 8h20M2 15h20"/><path class="b" d="M22 2v20H6"/></svg></button>
    <button aria-label="栅格"><svg class="ic" viewBox="0 0 24 24"><path class="b" d="M8 2v20M15 2v20M2 8h20M2 15h20"/><path d="M2 2h20v20H2z"/></svg></button>
    <button aria-label="正交"><svg class="ic" viewBox="0 0 24 24"><path d="M3 1v21h20"/><path class="b" d="M3 15h7v7"/></svg></button>
    <button class="on" aria-label="极轴"><svg class="ic" viewBox="0 0 24 24"><circle cx="12" cy="13" r="10"/><path class="b" d="M21 2l-9 11h9c0-4-2-6-4-7"/></svg></button>
    <button class="on" aria-label="对象捕捉"><svg class="ic" viewBox="0 0 24 24"><path d="M9 3h13v20H4V9"/><path class="r" d="M2 2h6v6H2z"/></svg></button>
    <button class="on" aria-label="对象追踪"><svg class="ic" viewBox="0 0 24 24"><path d="M22 3L3 21h20"/><path class="b" d="M9 13h6v7"/></svg></button>
    <button aria-label="动态UCS"><svg class="ic" viewBox="0 0 24 24"><path d="M4 1v20h19M1 4l3-3 3 3M4 21l8-9M20 18l3 3-3 3"/><path class="fy" d="M19 1l-8 11h5l-2 6 9-10h-5z"/></svg></button>
    <button class="on" aria-label="动态输入"><svg class="ic" viewBox="0 0 24 24"><path d="M1 9h12M7 3v12"/><path class="b" d="M9 14h14v6H9z"/></svg></button>
    <button aria-label="线宽显示"><svg class="ic" viewBox="0 0 24 24"><path d="M3 4h18"/><path class="s3" d="M3 11h18"/><path class="s4" d="M3 19h18"/></svg></button>
    <button class="on" aria-label="透明度显示"><svg class="ic" viewBox="0 0 24 24"><path class="fg" d="M3 3h18v18H3z"/><path class="gd" stroke-dasharray="1 1" d="M3 6h18M3 10h18M3 14h18M3 18h18"/></svg></button>
    <button aria-label="快捷特性"><svg class="ic" viewBox="0 0 24 24"><path d="M3 2h18v21H3z"/><path class="s4" d="M3 4h18"/><path d="M6 10h4M12 10h7M6 14h4M12 14h7M6 19h4M12 19h7"/></svg></button>
    <button aria-label="选择循环"><svg class="ic" viewBox="0 0 24 24"><path d="M1 7h11M6 2v10"/><path class="fw" d="M10 10h8v8h-8z"/><path class="b" d="M15 15h7v7h-7z"/></svg></button>
    <button aria-label="注释监视"><svg class="ic" viewBox="0 0 24 24"><path class="s3" d="M2 3h20M2 8h20M2 18h20M2 23h20"/><path class="b" stroke-dasharray="2 1" d="M2 13h20"/></svg></button>
    <button class="on" aria-label="循环切换"><svg class="ic" viewBox="0 0 24 24"><path d="M8 2h15v12H8zM13 2v12M18 2v12M8 8h15"/><path class="b" stroke-dasharray="3 1" d="M1 10h14v13H1zM1 16h14M8 10v13"/><path class="y" d="M22 14v7h-5M19 18l-3 3 3 3"/></svg></button>
  </div>
  <div class="tray">
    <button aria-label="中望"><svg class="ic"><use href="#logo"/></svg></button>
    <button aria-label="单位" class="unit">0.0</button>
    <span class="sc">毫米</span><svg class="car"><use href="#down"/></svg>
    <button aria-label="注释比例"><svg class="ic"><use href="#aviator"/></svg></button>
    <span class="sc n">1:1</span><svg class="car"><use href="#down"/></svg>
    <button aria-label="注释可见性"><svg class="ic" viewBox="0 0 24 24"><use href="#aviator"/><circle class="fy" cx="19" cy="16" r="4.500"/><path class="fy" d="M17 20h4v3h-4z"/></svg></button>
    <button aria-label="自动缩放"><svg class="ic" viewBox="0 0 24 24"><use href="#aviator"/><path class="g" d="M9 1L3 8h6l-4 5"/></svg></button>
    <button aria-label="隔离对象"><svg class="ic" viewBox="0 0 24 24"><path class="s15" d="M12 8H1v11h11"/><circle class="s15" cx="17" cy="6" r="5"/><path class="s15" d="M15 13l5 5-5 5-5-5z"/></svg></button>
    <button aria-label="设置"><svg class="ic" viewBox="0 0 24 24"><circle class="b s3" cx="12" cy="12" r="7"/><path class="b s4" d="M12 1v4M12 19v4M1 12h4M19 12h4M4 4l3 3M17 17l3 3M20 4l-3 3M7 17l-3 3"/></svg></button>
    <button aria-label="硬件加速"><svg class="ic" viewBox="0 0 24 24"><path class="b" d="M4 5h17v14H4zM6 1v4M10 1v4M14 1v4M18 1v4M6 19v4M10 19v4M14 19v4M18 19v4M1 8h3M1 16h3M21 8h2M21 16h2"/><path class="fy" d="M14 6l-6 7h4l-1 5 6-7h-4z"/></svg></button>
    <button aria-label="全屏"><svg class="ic" viewBox="0 0 24 24"><path d="M2 9V2h7M15 2h7v7M22 15v7h-7M9 22H2v-7M2 2l8 8M22 2l-8 8M22 22l-8-8M2 22l8-8"/></svg></button>
    <button aria-label="自定义"><svg class="ic" viewBox="0 0 24 24"><path class="b s3" d="M2 3h20M2 12h20M2 21h20"/></svg></button>
    <span class="mark">@云帆资源网 yfzyw.com</span>
  </div>
</footer>
<div class="desk"></div>
</body>
</html>
```
FILE: styles.css
```css
:root {
  --ui: "Noto Sans", "Noto Sans CJK SC", sans-serif;
  --mono: "Liberation Mono", "Noto Sans CJK SC", monospace;
  --cjk: "Noto Sans CJK SC", sans-serif;
  --bar: #444c58;
  --side: #323943;
  --dark: #2b2d32;
  --line: #9aabc5;
  --panel: #434d59;
  --edge: #56616c;
}
*, *::before, *::after { box-sizing: border-box; }
body {
  margin: 0;
  height: 100vh;
  display: flex;
  flex-direction: column;
  overflow: hidden;
  background: var(--side);
  color: #f4f6f8;
  font: 18px/24px var(--ui);
}
button, input, select, textarea {
  font: inherit;
  color: inherit;
  background: none;
  border: 0;
  padding: 0;
  margin: 0;
  border-radius: 0;
  outline: 0;
}
button { display: flex; align-items: center; justify-content: center; position: relative; }
select { appearance: none; min-width: 0; flex: 1; opacity: 1; }
h1, h2, h3, p, ul { margin: 0; padding: 0; font: inherit; }
a { color: inherit; text-decoration: none; }
i { font-style: normal; }
svg { flex: none; display: block; fill: none; }
.defs { position: absolute; width: 0; height: 0; }

/* icon palette */
.ic { width: 24px; height: 24px; fill: none; stroke: #e4e8ec; stroke-width: 2; overflow: visible; }
.s1 { stroke-width: 1; } .s15 { stroke-width: 1.5; } .s2 { stroke-width: 2; stroke: #fff; } .s3 { stroke-width: 3; }
.s4 { stroke-width: 4; } .s5 { stroke-width: 5; } .s9 { stroke-width: 10; } .cap { stroke-linecap: round; }
.wh { stroke: #fff; } .w { stroke: #e4e8ec; }
.b { stroke: #5ab0f5; } .c { stroke: #3cb4ee; } .y { stroke: #e6b450; } .g { stroke: #b4bac2; } .gd { stroke: #50565e; }
.l { stroke: #b8cce6; } .or { stroke: #f0932e; } .gr { stroke: #60c878; } .dk { stroke: #222a34; } .ye { stroke: #f2e63c; }
.m { stroke: #5fdcb0; } .r { stroke: #e8504c; }
.fw, .fb, .fl, .fc, .fy, .fg, .fo, .fo2, .fr, .fp, .f-purple, .f-violet, .f-lilac, .f-save, .f-pale, .f-folder, .f-brown,
.f-green, .f-dwg, .f-sky, .f-ball, .f-sheet { stroke: none; }
.fw { fill: #fff; } .fb { fill: #5ab4fa; } .fl { fill: #c3d7ee; } .fc { fill: #2fbcf6; } .fy { fill: #fbc531; }
.fg { fill: #b2b2b2; } .fo { fill: #e6b450; } .fo2 { fill: #f9a51b; } .fr { fill: #e8504c; } .fp { fill: #e4e6e8; }
.f-purple { fill: #7c50d8; } .f-violet { fill: #a37ce8; } .f-lilac { fill: #d2bcf8; } .f-save { fill: #5a92d0; }
.f-pale { fill: #f9dc92; } .f-folder { fill: #f8b468; } .f-brown { fill: #a65428; } .f-green { fill: #74b984; }
.f-dwg { fill: #1260d4; } .f-sky { fill: #b9dcfb; } .f-ball { fill: #ccd6e6; } .f-sheet { fill: #dceaff; }
.f-bar { fill: var(--bar); } .f-bar:not(.w) { stroke: none; }
.blade { fill: #c8dcf2; stroke: #5ab0f5; stroke-width: 1; }
.fill { fill: currentColor; stroke: none; }
.car { width: 12px; height: 9px; color: #fff; }
.x { width: 16px; height: 16px; stroke: #fff; stroke-width: 2; }
.sm { width: 18px; height: 18px; stroke-width: 2; }
.ic text { stroke: none; fill: #5ab0f5; font-family: var(--ui); }
.ic .tiny { fill: #fff; font-size: 10px; }
.ic .mini { font-size: 11px; font-weight: 700; }
.ic .num { font-size: 12px; font-weight: 700; fill: #3cb4ee; }
.ic .cy { fill: #3cb4ee; }
.ic .mt { fill: #5fdcb0; font-family: var(--mono); }
.ital { font: italic 32px "Liberation Serif", serif; stroke: none; fill: currentColor; }
.ic .kk { font: bold 24px "Liberation Serif", serif; }
.blue { color: #5ab4fa; } .gray { color: #b4bac2; }
.fly::after {
  content: "";
  position: absolute;
  right: 3px;
  bottom: 2px;
  width: 5px;
  height: 5px;
  background: linear-gradient(135deg, transparent 50%, #fff 50%);
}

/* title and menus */
.titlebar { display: flex; align-items: center; height: 34px; padding: 0 2px; gap: 5px; background: #f3f3f3; color: #101010; flex: none; }
.titlebar h1 { flex: 1; white-space: nowrap; font: 18px/24px Roboto, "Noto Sans CJK SC", sans-serif; }
.winbtns { display: flex; }
.winbtns button { width: 70px; height: 34px; }
.winbtns svg { width: 14px; height: 14px; stroke: #111; stroke-width: 1.5; overflow: visible; }
.menubar { display: flex; gap: 24px; height: 30px; padding: 0 11px 2px; align-items: center; background: #2e3840; border-bottom: 1px solid #f0f2f4; flex: none; white-space: nowrap; }
u { text-underline-offset: 3px; }

/* toolbars */
.bars { flex: none; height: 72px; }
.bar { display: flex; align-items: center; width: max-content; height: 35px; padding: 0 3px 1px 1px; background: var(--bar); border-top: 1px solid var(--line); }
.bar > button { width: 32px; height: 32px; }
.grip { width: 4px; height: 27px; margin: 0 1px 0 5px; border: solid var(--line); border-width: 0 1px; flex: none; }
.grip.first { height: 33px; margin-left: 1px; }
.grip.tight { margin-left: 1px; }
.wide { margin: 0 5px; }
.undo { display: flex; align-items: center; width: 90px; height: 31px; padding: 0 4px; justify-content: space-between; background: #212631; }
.combo { display: flex; align-items: center; height: 30px; padding: 0 6px 0 4px; background: #212631; border-bottom: 1px solid #70757f; }
.combo select { font: 18px/22px var(--cjk); height: 24px; }
.combo.style { width: 151px; }
.combo.style select, .combo.layer select { font: 15px/24px var(--mono); }
.layer { width: 450px; gap: 3px; margin-right: 1px; }
.color { width: 230px; gap: 5px; margin-left: 2px; }
.ltype { width: 255px; gap: 5px; }
.lweight { width: 184px; gap: 5px; }
.pstyle { width: 176px; }
.off, .off .car { color: #6c717b; }
.pstyle select { padding-left: 4px; }
.swatch { display: inline-block; flex: none; width: 15px; height: 15px; margin-right: 3px; background: #fff; border: 1px solid #000; }
.swatch.big { width: 20px; height: 20px; margin: 0 2px; }
.rule { display: inline-block; flex: none; width: 38px; height: 1px; margin: 0 2px; background: #fff; vertical-align: middle; }
.rule.long { width: 62px; }

/* workspace */
.work { flex: 1; display: flex; min-height: 0; }
.left { flex: 1; min-width: 0; display: flex; flex-direction: column; }
.stage { flex: 1; display: flex; min-height: 0; }
.dock { width: 39px; flex: none; }
.vbar { width: 36px; padding-bottom: 4px; background: var(--bar); border-left: 1px solid var(--line); }
.vbar::before { content: ""; display: block; height: 6px; margin: 0 1px 2px 0; border: solid var(--line); border-width: 2px 0; }
.vbar button { width: 32px; height: 31px; }
.tools { width: 78px; padding-left: 2px; display: flex; align-items: flex-start; flex: none; }
.doc { flex: 1; min-width: 0; display: flex; flex-direction: column; }
.doctabs { display: flex; height: 30px; padding-top: 1px; gap: 2px; background: var(--dark); flex: none; }
.tabmenu { width: 16px; background: #4c5862; }
.doctab { display: flex; align-items: center; width: 259px; padding: 0 11px 0 2px; gap: 4px; background: #546683; font: bold 17px/24px var(--mono); }
.doctab span { flex: 1; }
.newtab { width: 43px; padding-right: 4px; background: #424750; }
.canvas { flex: 1; min-height: 0; position: relative; overflow: hidden; background: #212830; }
.drawing { width: 1683px; height: 1076px; stroke: #fff; stroke-width: 1; }
.drawing text { font: 300 44px Lato, sans-serif; fill: #fff; stroke: none; }
.crisp { shape-rendering: crispEdges; }
.viewlabel { position: absolute; left: 5px; top: 1px; display: flex; gap: 3px; font: 18px/24px var(--cjk); }
.viewlabel i { font: 15px/24px var(--mono); }
.mdi { position: absolute; right: 10px; top: 11px; display: flex; gap: 10px; }
.mdi svg { width: 12px; height: 12px; stroke: #eee; stroke-width: 2; }
.layouts { display: flex; gap: 2px; height: 22px; background: var(--dark); flex: none; font: 18px/20px var(--cjk); }
.layouts button { background: #424750; padding-bottom: 2px; }
.nav { width: 23px; }
.nav svg { width: 14px; height: 14px; stroke: #9aa0a8; }
.thin { stroke-width: 1; }
.lay { width: 87px; }
.layouts .model { width: 79px; background: #546683; font-weight: 700; }
.layouts .plus { width: 48px; }

/* command window */
.command { display: flex; height: 224px; margin: 5px 4px 0 1px; gap: 2px; background: var(--side); flex: none; border-top: 1px solid #2b2d32; }
.strip { width: 27px; padding: 4px 6px; background: #454b5a; }
.strip .x { stroke: #7c828e; stroke-width: 1.5; }
.cmdbody { flex: 1; display: flex; flex-direction: column; background: #2b2d32; color: #b2b6bc; font: 300 24px/22px var(--cjk); }
.cmdbody i { font: 20px/22px var(--mono); white-space: pre; }
.log { flex: 1; display: flex; border-bottom: 1px solid #56616c; }
.lines { flex: 1; padding-left: 1px; }
.lines p { height: 27px; }
.prompt { display: flex; height: 31px; align-items: center; padding-left: 1px; }
.prompt input { flex: 1; }
.scroll { width: 15px; display: flex; flex-direction: column; align-items: center; background: #3a3e45; padding: 11px 0; }
.scroll svg { width: 12px; height: 8px; stroke: #78828c; stroke-width: 2; }
.track { flex: 1; }
.thumb { width: 13px; background: #525d67; }
.thumb.s { height: 20px; margin-bottom: 8px; }
.scroll.big { width: 26px; }
.thumb.t { width: 24px; height: 109px; margin-top: 8px; }
.scroll.main { margin-top: 30px; padding-bottom: 10px; }
.thumb.m { height: 303px; margin-top: 8px; }

/* side panels */
.panel { flex: none; background: var(--panel); border: solid var(--dark); border-width: 3px 2px 0 3px; min-height: 0; display: flex; flex-direction: column; }
.panel header { display: flex; justify-content: space-between; align-items: center; height: 29px; padding: 0 9px 3px 19px; background: #515d68; flex: none; }
.panel h2 { font: 700 21px/26px var(--cjk); }
.calc { width: 419px; margin-right: 3px; }
.calcbody { flex: 1; min-height: 0; display: flex; padding-right: 5px; }
.calcmain { flex: 1; padding: 10px 7px 0 10px; overflow: hidden; }
.ctools { display: flex; gap: 6px; padding-left: 5px; margin-bottom: 22px; }
.ctools button, .vtools button { width: 30px; height: 30px; }
.ctools button, .vtools .on { border: 1px solid #aeb1b4; }
.ctools svg { width: 22px; height: 22px; }
.hist { display: block; width: 100%; height: 112px; border: 1px solid #69696b; resize: none; }
.expr { display: block; width: 100%; height: 28px; margin-top: 5px; border: 1px solid #69696b; }
.sec { height: 28px; margin-top: 18px; padding-left: 4px; font: 700 21px/25px var(--cjk); }
.sec.near { margin-top: 10px; }
.sec.far { margin-top: 37px; }
.sec span { font-weight: 300; }
.keys { display: grid; grid-template-columns: repeat(5, 61px); gap: 8px 12px; padding-left: 12px; }
.keys button, .ops button { height: 28px; border: 1px solid #aeb1b4; }
.vtools { display: flex; gap: 5px; padding-left: 10px; }
.tree { display: flex; height: 196px; border: 1px solid #69696b; overflow: hidden; }
.tree ul { flex: 1; list-style: none; }
.tree li { display: flex; align-items: center; height: 26px; padding-left: 57px; gap: 5px; }
.tree .root { padding-left: 9px; gap: 6px; font-family: var(--cjk); line-height: 22px; }
.minus { width: 13px; height: 13px; background: linear-gradient(#3f62b0, #3f62b0) 2px 5px / 7px 1px no-repeat #e8eaec; border: 1px solid #999; }
.detail, .single { display: block; height: 28px; padding: 0 2px; font-family: var(--cjk); }
.single { height: 23px; padding: 0 8px; line-height: 20px; }
.det { width: auto; margin: 0 2px; min-width: 373px; }
table { border-collapse: collapse; }
th { font-weight: 400; text-align: left; }
.units { width: 367px; margin-left: 5px; border-right: 1px solid var(--edge); }
.units tr { height: 28px; border-bottom: 1px solid var(--edge); }
.units th, .units td { padding: 0 0 2px; line-height: 24px; }
.units th { width: 168px; border-right: 1px solid var(--edge); padding-left: 4px; }
.units td { padding-left: 5px; }
.units svg { display: inline-block; vertical-align: -3px; }
.ops { display: grid; grid-template-columns: repeat(4, 84px); gap: 8px; padding-left: 8px; }
.props { width: 337px; border-right-width: 4px; }
.props header { padding: 0 9px 3px 12px; }
.pick { display: flex; align-items: center; gap: 9px; padding: 6px 10px 6px 6px; }
.pickbox { display: flex; align-items: center; width: 219px; height: 32px; padding: 0 4px 0 2px; border: 1px solid var(--edge); }
.props .pick .car, .grp .car { width: 14px; height: 8px; }
.grp { display: flex; align-items: center; justify-content: space-between; height: 36px; width: 301px; margin: 0 0 0 6px; padding: 0 10px 2px 4px; background: #3a3e45; border: 1px solid var(--edge); font: 700 18px/24px var(--cjk); color: #e6eaee; }
.grp .car { color: #e6eaee; }
.props table { width: 285px; margin: 0 0 4px 22px; color: #e2e6ea; table-layout: fixed; }
.props tr { height: 36px; }
.props th, .props td { height: 36px; padding: 0 0 1px 3px; border: 1px solid var(--edge); border-top: 0; line-height: 24px; white-space: nowrap; }
.props th { width: 91px; padding: 3px 0 0 4px; }
.props .rule { width: 40px; margin: 0 4px 0 0; }
.props .rule.long { width: 45px; }
.props .ro td { color: #8b949d; }

/* status bar */
.status { display: flex; align-items: center; height: 35px; flex: none; border-top: 1px solid #2a2f37; background: #31363f; }
.coords { width: 372px; height: 33px; margin: 0 4px 0 10px; font: 15px/36px var(--mono); border-bottom: 1px solid #4d5561; white-space: pre; }
.toggles { display: flex; gap: 4px; }
.toggles button { width: 28px; height: 29px; }
.toggles .on { background: #4e6580; border: 1px solid #58b0f5; }
.toggles svg { width: 22px; height: 22px; }
.tray { display: flex; align-items: center; margin-left: auto; padding-right: 5px; gap: 4px; position: relative; }
.tray button { width: 27px; height: 27px; }
.tray .unit { width: 24px; height: 22px; border: solid #4f8fc4; border-width: 1px 1px 2px; color: #5ab0f5; font-size: 14px; margin-left: 1px; }
.sc { color: #9a9ea4; font: 17px/24px var(--cjk); }
.sc.n { font: 15px/24px var(--mono); }
.tray .car { margin: 0 5px 0 6px; width: 14px; height: 8px; }
.mark { position: absolute; right: 9px; top: 13px; font: 12px/16px var(--ui); color: rgba(10, 12, 16, .6); white-space: nowrap; pointer-events: none; }
.desk { height: 11px; flex: none; background: #dad9dc; border-top: 2px solid #a9a9ab; }
```
